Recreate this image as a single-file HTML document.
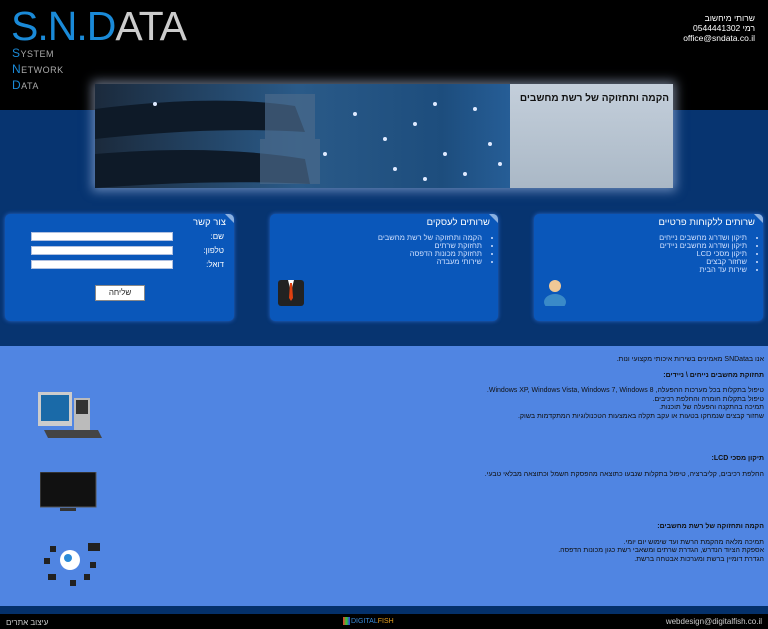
<!DOCTYPE html>
<html><head><meta charset="utf-8"><style>
*{margin:0;padding:0;box-sizing:border-box}
body{width:768px;height:629px;overflow:hidden;background:#000;font-family:"Liberation Sans","Noto Sans CJK SC",sans-serif;position:relative}
.abs{position:absolute}
.top{left:0;top:0;width:768px;height:110px;background:#000}
.band{left:0;top:110px;width:768px;height:236px;background:#073470}
.light{left:0;top:346px;width:768px;height:260px;background:#5085e2}
.strip{left:0;top:606px;width:768px;height:8px;background:#04306a}
.foot{left:0;top:614px;width:768px;height:15px;background:#000;color:#ccc;font-size:8px}
.logo{left:11px;top:4px;font-size:41px;color:#ccc;line-height:44px;letter-spacing:-1px}
.logo b{font-weight:normal;color:#1a8ad8}
.sub{left:12px;font-size:9px;color:#aaa;letter-spacing:.5px}
.sub b{font-weight:normal;color:#1a8ad8;font-size:12px}
.contact{right:13px;top:13px;color:#fff;font-size:8.5px;line-height:10px;text-align:right;direction:rtl}
.banner{left:95px;top:84px;width:578px;height:104px;box-shadow:0 0 10px 3px rgba(200,220,255,.5);background:linear-gradient(90deg,#1b2a3c 0%,#2a5a88 35%,#1d4d7d 60%,#2c69a8 80%);overflow:hidden}
.bgr{left:415px;top:0;width:163px;height:104px;background:linear-gradient(180deg,#c4cfdb,#aab8c6)}
.panel{top:214px;height:107px;background:#0a57ba;border-radius:5px;box-shadow:0 0 4px #2a6ad0;color:#cfe0ff;font-size:7.5px;direction:rtl}
.panel h3{font-weight:normal;color:#fff;font-size:9.5px;padding:3px 8px 0 0}
.panel ul{padding:6px 16px 0 0;line-height:8px}
.tri{right:0;top:0;width:0;height:0;border-top:9px solid #8ab0e0;border-left:9px solid transparent;border-top-right-radius:5px}
.txt{right:4px;top:356px;width:460px;direction:rtl;color:#111;font-size:7px;line-height:8.5px}
.txt p{margin-bottom:7px}
input{position:absolute;left:26px;width:142px;height:9px;border:1px solid #b0c0e0;background:#fff}
.lbl{position:absolute;right:10px;color:#fff;font-size:8px}
</style></head><body>
<div class="abs top"></div>
<div class="abs band"></div>
<div class="abs light"></div>
<div class="abs strip"></div>
<div class="abs logo"><b>S.N.D</b>ATA</div>
<div class="abs sub" style="top:46px"><b>S</b>YSTEM</div>
<div class="abs sub" style="top:62px"><b>N</b>ETWORK</div>
<div class="abs sub" style="top:78px"><b>D</b>ATA</div>
<div class="abs contact">שרותי מיחשוב<br>רמי 0544441302<br>office@sndata.co.il</div>
<div class="abs banner">
 <svg class="abs" style="left:0;top:0" width="415" height="104">
  <path d="M0 25 Q120 10 200 22 L210 48 Q120 42 0 55Z" fill="#0e1a28"/>
  <path d="M0 70 Q120 60 210 75 L215 100 Q120 95 0 104Z" fill="#0e1a28"/>
  <rect x="170" y="10" width="50" height="45" fill="#4a6a8a" opacity=".7"/>
  <rect x="165" y="55" width="60" height="45" fill="#4a6a8a" opacity=".7"/>
  <g fill="#dfeaff"><circle cx="260" cy="30" r="2"/><circle cx="290" cy="55" r="2"/><circle cx="320" cy="40" r="2"/><circle cx="350" cy="70" r="2"/><circle cx="300" cy="85" r="2"/><circle cx="380" cy="25" r="2"/><circle cx="395" cy="60" r="2"/><circle cx="340" cy="20" r="2"/><circle cx="370" cy="90" r="2"/><circle cx="60" cy="20" r="2"/><circle cx="230" cy="70" r="2"/><circle cx="405" cy="80" r="2"/><circle cx="330" cy="95" r="2"/></g>
 </svg>
 <div class="abs bgr"></div>
 <div class="abs" style="right:4px;top:9px;font-size:10px;font-weight:bold;color:#111;direction:rtl">הקמה ותחזוקה של רשת מחשבים</div>
</div>

<div class="abs panel" style="left:534px;width:229px"><div class="abs tri"></div><h3>שרותים ללקוחות פרטיים</h3>
<ul><li>תיקון ושדרוג מחשבים נייחים</li><li>תיקון ושדרוג מחשבים ניידים</li><li>תיקון מסכי LCD</li><li>שחזור קבצים</li><li>שירות עד הבית</li></ul>
<svg class="abs" style="left:10px;top:64px" width="22" height="28"><circle cx="11" cy="8" r="6" fill="#f0c896"/><ellipse cx="11" cy="24" rx="11" ry="8" fill="#3a8ac8"/></svg></div>

<div class="abs panel" style="left:270px;width:228px"><div class="abs tri"></div><h3>שרותים לעסקים</h3>
<ul><li>הקמה ותחזוקה של רשת מחשבים</li><li>תחזוקת שרתים</li><li>תחזוקת מכונות הדפסה</li><li>שירותי מעבדה</li></ul>
<svg class="abs" style="left:8px;top:64px" width="26" height="28"><rect x="0" y="2" width="26" height="26" rx="3" fill="#222"/><path d="M10 2 L13 14 L16 2Z" fill="#fff"/><path d="M12 5 L14 5 L15 20 L13 23 L11 20Z" fill="#e04010"/></svg></div>

<div class="abs panel" style="left:5px;width:229px"><div class="abs tri"></div><h3>צור קשר</h3>
<span class="lbl" style="top:18px">שם:</span><span class="lbl" style="top:32px">טלפון:</span><span class="lbl" style="top:46px">דואל:</span>
<input style="top:18px"><input style="top:32px"><input style="top:46px">
<div class="abs" style="left:90px;top:71px;width:50px;height:16px;background:#fff;border:1px solid #888;color:#222;font-size:8px;text-align:center;line-height:14px">שליחה</div></div>

<div class="abs txt">
<p>אנו בSNData מאמינים בשירות איכותי מקצועי ונות.</p>
<p><b>תחזוקת מחשבים נייחים \ ניידים:</b></p>
<p>טיפול בתקלות בכל מערכות ההפעלה, Windows XP, Windows Vista, Windows 7, Windows 8.<br>טיפול בתקלות חומרה והחלפת רכיבים.<br>תמיכה בהתקנה והפעלה של תוכנות.<br>שחזור קבצים שנמחקו בטעות או עקב תקלה באמצעות הטכנולוגיות המתקדמות בשוק.</p>
<p style="margin-top:34px"><b>תיקון מסכי LCD:</b></p>
<p>החלפת רכיבים, קליברציה, טיפול בתקלות שנבעו כתוצאה מהפסקת חשמל וכתוצאה מבלאי טבעי.</p>
<p style="margin-top:44px"><b>הקמה ותחזוקה של רשת מחשבים:</b></p>
<p>תמיכה מלאה מהקמת הרשת ועד שימוש יום יומי.<br>אספקת הציוד הנדרש, הגדרת שרתים ומשאבי רשת כגון מכונות הדפסה.<br>הגדרת דומיין ברשת ומערכות אבטחה ברשת.</p>
</div>

<svg class="abs" style="left:36px;top:390px" width="68" height="56"><rect x="2" y="2" width="34" height="34" fill="#ccc"/><rect x="5" y="5" width="28" height="26" fill="#1a6aa8"/><rect x="38" y="8" width="16" height="36" fill="#bbb"/><rect x="40" y="10" width="12" height="14" fill="#333"/><path d="M8 40 L62 40 L66 48 L12 48Z" fill="#444"/></svg>
<svg class="abs" style="left:40px;top:472px" width="58" height="42"><rect x="0" y="0" width="56" height="35" fill="#111" stroke="#555"/><rect x="20" y="36" width="16" height="3" fill="#333"/></svg>
<svg class="abs" style="left:36px;top:540px" width="72" height="50"><circle cx="34" cy="20" r="10" fill="#fff"/><circle cx="32" cy="18" r="4" fill="#2a8ad8"/><g fill="#222"><rect x="52" y="3" width="12" height="8"/><rect x="14" y="6" width="6" height="6"/><rect x="8" y="18" width="6" height="6"/><rect x="54" y="22" width="6" height="6"/><rect x="12" y="34" width="8" height="6"/><rect x="34" y="40" width="6" height="6"/><rect x="48" y="34" width="6" height="6"/></g></svg>

<div class="abs foot"><span class="abs" style="left:6px;top:4px">עיצוב אתרים</span>
<span class="abs" style="left:343px;top:3px;width:7px;height:8px;background:linear-gradient(90deg,#e33,#3c3,#33e)"></span><span class="abs" style="left:351px;top:4px;color:#3a8ad8;font-size:7px">DIGITAL<span style="color:#e8a020">FISH</span></span>
<span class="abs" style="right:6px;top:3px">webdesign@digitalfish.co.il</span></div>
</body></html>
